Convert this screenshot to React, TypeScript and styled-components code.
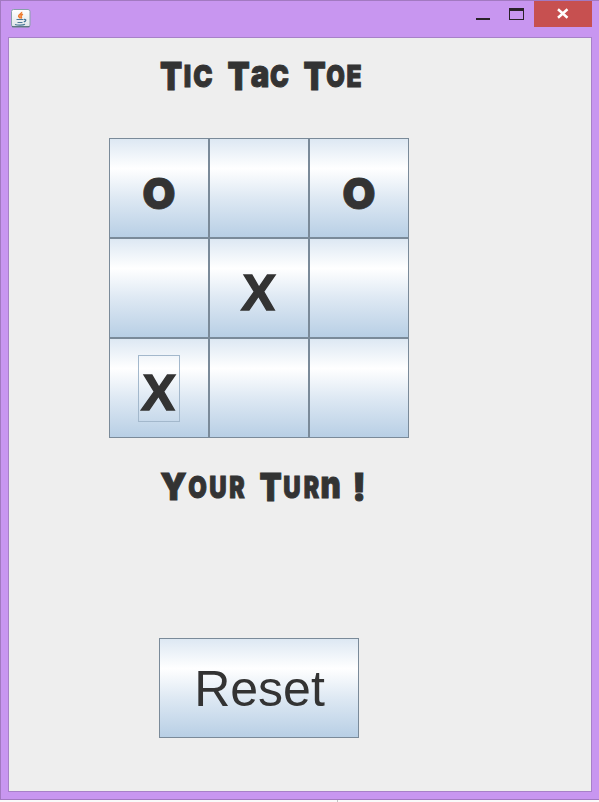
import React from "react";
import styled, { createGlobalStyle, css } from "styled-components";

const GlobalStyle = createGlobalStyle`
  * { box-sizing: border-box; }
  body { margin: 0; background: #fafafa; overflow: hidden; }
  button { font: inherit; margin: 0; }
`;

const ink = "#333333";

const metalFill = css`
  background: linear-gradient(180deg, #dde8f3 0%, #ffffff 30%, #dde8f3 61%, #b8cfe5 100%);
  border: 1px solid #7a8a99;
  color: ${ink};
`;

const Desktop = styled.div`
  width: 599px;
  height: 802px;
  display: flex;
  flex-direction: column;
`;

const Window = styled.div`
  width: 599px;
  height: 800px;
  display: flex;
  flex-direction: column;
  background: #c896f0;
  border: 1px solid #a279c1;
  border-right: 0;
  padding: 0 7px 7px 7px;
`;

const TitleBar = styled.header`
  height: 36px;
  flex: none;
  display: flex;
  align-items: flex-start;
  justify-content: space-between;
`;

const AppIcon = styled.svg`
  margin: 8px 0 0 3px;
  width: 20px;
  height: 19px;
`;

const Controls = styled.div`
  display: flex;
  height: 26px;
`;

const ControlButton = styled.button<{ $width: number; $danger?: boolean }>`
  width: ${(p) => p.$width}px;
  height: 26px;
  padding: 0;
  border: 0;
  display: block;
  background: ${(p) => (p.$danger ? "#c75050" : "transparent")};

  svg { display: block; }
`;

const Content = styled.main`
  flex: 1;
  border: 1px solid #a781c8;
  background: #eeeeee;
  padding-left: 100px;
  display: flex;
  flex-direction: column;
  align-items: flex-start;
`;

const Heading = styled.h1<{ $top: number }>`
  margin: ${(p) => p.$top}px 0 0 51px;
  height: 40px;
  display: flex;
  align-items: baseline;
  font: 900 40px/40px Inter, "Liberation Sans", sans-serif;
  white-space: pre;
  color: ${ink};
`;

const Slot = styled.span<{ $width: number; $size: number; $stretch: number; $lift: number }>`
  width: ${(p) => p.$width}px;
  font-size: ${(p) => p.$size}px;
  display: inline-flex;
  justify-content: center;
  transform: translateY(${(p) => -p.$lift}px) scaleX(${(p) => p.$stretch});
  -webkit-text-stroke: 1px ${ink};
`;

const Board = styled.section`
  margin-top: 42px;
  display: grid;
  grid-template-columns: repeat(3, 100px);
  grid-template-rows: repeat(3, 100px);
`;

const Cell = styled.button`
  ${metalFill}
  padding: 0;
  display: flex;
  align-items: center;
  justify-content: center;
`;

const Mark = styled.span<{ $focused?: boolean }>`
  width: 42px;
  height: 67px;
  border: 1px solid ${(p) => (p.$focused ? "#a3b8cc" : "transparent")};
  display: flex;
  justify-content: center;
  line-height: 75px;
`;

const Letter = styled.span<{ $kind: string }>`
  ${(p) =>
    p.$kind === "X"
      ? css`
          font-family: "Liberation Sans", sans-serif;
          font-weight: 700;
          font-size: 51px;
          transform: translateY(-1px) skewX(-3deg);
          -webkit-text-stroke: 1.4px ${ink};
        `
      : css`
          font-family: Inter, sans-serif;
          font-weight: 900;
          font-size: 43px;
          -webkit-text-stroke: 0.8px ${ink};
        `}
`;

const Reset = styled.button`
  ${metalFill}
  width: 200px;
  height: 100px;
  margin: 131px 0 0 50px;
  padding: 2px 0 0 1px;
  font: 50px/96px "Liberation Sans", Arial, sans-serif;
`;

const Below = styled.div`
  width: 338px;
  height: 2px;
  border-right: 1px solid #c4c4c4;
`;

type Glyph = [char: string, width: number, size: number, stretch: number, lift: number];

const title: Glyph[] = [
  ["T", 22, 39, 0.83, 0],
  ["I", 11, 30, 0.85, 3],
  ["C", 20, 30, 0.86, 3],
  [" ", 14, 30, 1, 0],
  ["T", 23, 39, 0.83, 0],
  ["a", 20, 38, 0.82, 3],
  ["C", 19, 30, 0.84, 3],
  [" ", 14, 30, 1, 0],
  ["T", 23, 39, 0.83, 0],
  ["O", 19, 30, 0.8, 3],
  ["E", 18, 30, 0.82, 3],
];

const status: Glyph[] = [
  ["Y", 27, 37, 0.92, 1],
  ["O", 21, 30, 0.8, 3],
  ["U", 20, 30, 0.8, 3],
  ["R", 18, 30, 0.77, 3],
  [" ", 13, 30, 1, 0],
  ["T", 23, 39, 0.83, 0],
  ["U", 20, 30, 0.8, 3],
  ["R", 19, 30, 0.77, 3],
  ["n", 19, 38, 0.82, 3],
  [" ", 12, 30, 1, 0],
  ["!", 14, 38, 0.95, 0],
];

const marks = ["O", "", "O", "", "X", "", "X", "", ""];

function Lettering({ glyphs, top }: { glyphs: Glyph[]; top: number }) {
  return (
    <Heading $top={top}>
      {glyphs.map(([char, width, size, stretch, lift], i) => (
        <Slot key={i} $width={width} $size={size} $stretch={stretch} $lift={lift}>{char}</Slot>
      ))}
    </Heading>
  );
}

function JavaIcon() {
  return (
    <AppIcon viewBox="0 0 20 19" fill="none">
      <defs>
        <linearGradient id="tile" x1="0" y1="0" x2="0" y2="1">
          <stop offset="0" stopColor="#ffffff" />
          <stop offset="1" stopColor="#dfe5e8" />
        </linearGradient>
      </defs>
      <rect x=".5" y=".5" width="18.5" height="17.5" rx="2" fill="url(#tile)" stroke="#879eaa" />
      <path d="M1 17.7h17.5" stroke="#4d6570" />
      <path d="M10.5 3c1 1.6-3.2 2.5-2.8 4.2.2.8 1.4 1.4 1.5 2.2M12 5.3c-2.4 1.1-2.4 1.6-1.7 2.5.5.7 0 1.3-.4 1.7" stroke="#ee7a2c" strokeWidth="1.6" />
      <path d="M5.5 10.5h7M6.5 13.500h5M4 15.5c2.5.9 8 .8 10-.3M13 10.4c2.7-.2 2.2 1.8-.2 2.5" stroke="#4c7897" strokeWidth="1.2" />
    </AppIcon>
  );
}

export default function App() {
  return (
    <Desktop>
      <GlobalStyle />
      <Window>
        <TitleBar>
          <JavaIcon />
          <Controls>
            <ControlButton $width={33} aria-label="Minimize">
              <svg width="33" height="26"><path d="M8 17h14v2H8z" fill="#2a2229" /></svg>
            </ControlButton>
            <ControlButton $width={33} aria-label="Maximize">
              <svg width="33" height="26"><path fillRule="evenodd" d="M8 7h15v12H8zM9 10v8h13v-8z" fill="#2a2229" /></svg>
            </ControlButton>
            <ControlButton $width={58} $danger aria-label="Close">
              <svg width="58" height="26"><path d="M24 8.3l9.5 8.4M33.5 8.3l-9.5 8.4" stroke="#fff" strokeWidth="2.5" /></svg>
            </ControlButton>
          </Controls>
        </TitleBar>
        <Content>
          <Lettering glyphs={title} top={18} />
          <Board>
            {marks.map((mark, i) => (
              <Cell key={i}>
                {mark && <Mark $focused={i === 6}><Letter $kind={mark}>{mark}</Letter></Mark>}
              </Cell>
            ))}
          </Board>
          <Lettering glyphs={status} top={29} />
          <Reset>Reset</Reset>
        </Content>
      </Window>
      <Below />
    </Desktop>
  );
}
